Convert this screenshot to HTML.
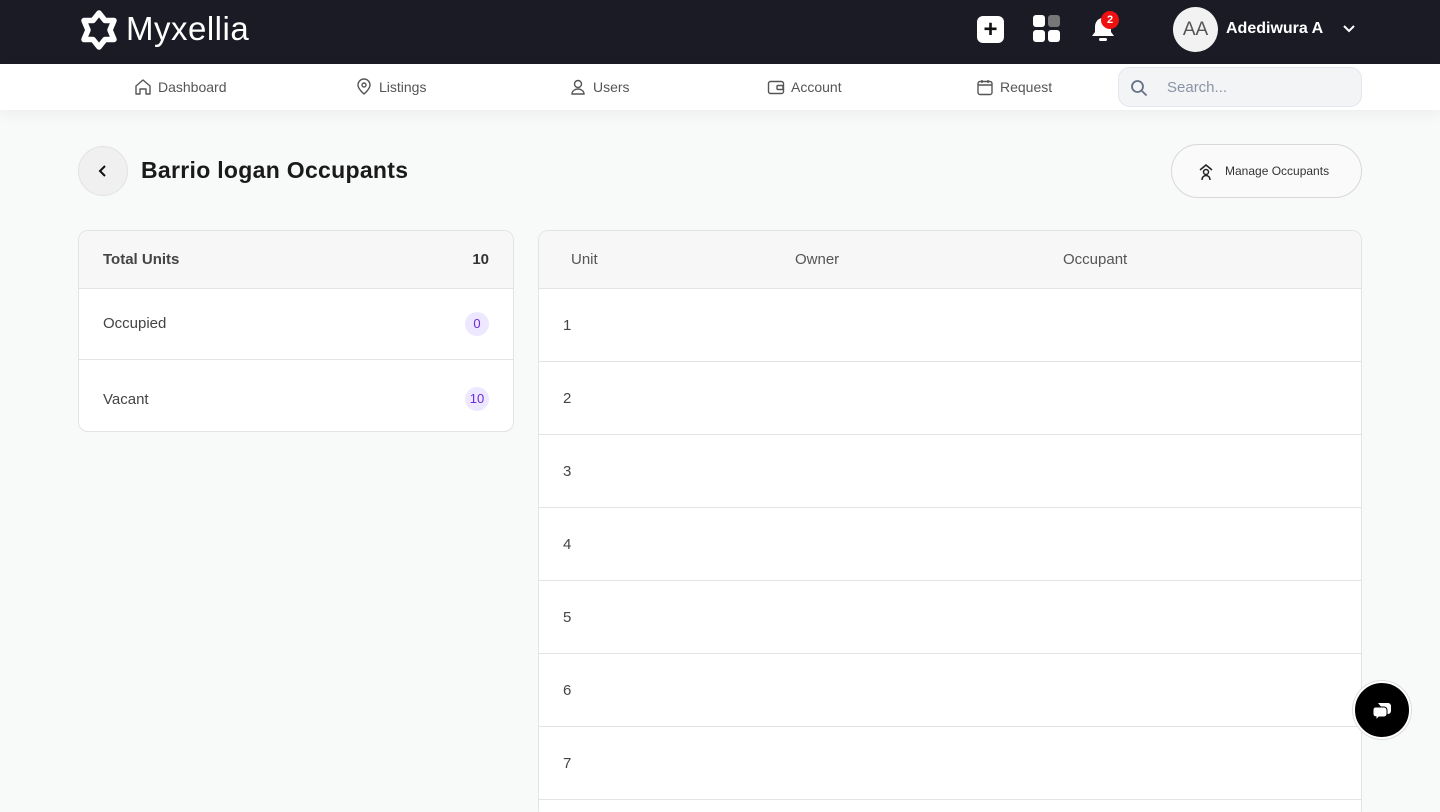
<!DOCTYPE html>
<html style="overflow:hidden;height:812px"><head><style>
*{box-sizing:border-box;margin:0;padding:0}
body{width:1440px;height:812px;overflow:hidden;background:#f8f9f9;font-family:"Liberation Sans",sans-serif;color:#222;position:relative}
.top{position:absolute;left:0;top:0;width:1440px;height:64px;background:#1b1b26}
.nav{position:absolute;left:0;top:64px;width:1440px;height:46px;background:#fff;box-shadow:0 4px 14px rgba(0,0,0,.05)}
.ni{position:absolute;top:0;height:46px;display:flex;align-items:center;gap:6px;font-size:14px;color:#555}
.search{position:absolute;left:1118px;top:3px;width:244px;height:40px;border:1px solid #e3e6ee;background:#f3f4f6;border-radius:12px}
.card{position:absolute;background:#fff;border:1px solid #e3e3e3;border-radius:10px;overflow:hidden}
.badge{position:absolute;right:24px;width:24px;height:24px;border-radius:12px;background:#ede8ff;color:#6b2bd9;font-size:13px;text-align:center;line-height:24px}
.row{position:absolute;left:0;width:100%;border-top:1px solid #e3e3e3;font-size:15px;color:#444}
</style></head><body>
<div class="top">
 <svg style="position:absolute;left:79px;top:9px" width="40" height="42" viewBox="0 0 40 42"><path d="M20 4 L26 11.5 L35 11.5 L31 21 L35 30.5 L26 30.5 L20 38 L14 30.5 L5 30.5 L9 21 L5 11.5 L14 11.5 Z" fill="none" stroke="#fff" stroke-width="5.5" stroke-linejoin="round"/></svg>
 <div style="position:absolute;left:126px;top:10px;font-size:33px;color:#fff;letter-spacing:0.5px">Myxellia</div>
 <div style="position:absolute;left:977px;top:16px;width:27px;height:27px;background:#fff;border-radius:6px;color:#111;font-size:24px;font-weight:bold;text-align:center;line-height:27px">+</div>
 <div style="position:absolute;left:1033px;top:15px;width:12px;height:12px;background:#fff;border-radius:3px"></div>
 <div style="position:absolute;left:1048px;top:15px;width:12px;height:12px;background:#777;border-radius:3px"></div>
 <div style="position:absolute;left:1033px;top:30px;width:12px;height:12px;background:#fff;border-radius:3px"></div>
 <div style="position:absolute;left:1048px;top:30px;width:12px;height:12px;background:#fff;border-radius:3px"></div>
 <svg style="position:absolute;left:1090px;top:16px" width="26" height="28" viewBox="0 0 26 28"><path d="M13 2c-5 0-8 4-8 9v5l-3 4h22l-3-4v-5c0-5-3-9-8-9z" fill="#fff"/><rect x="9" y="22" width="8" height="3" rx="1.5" fill="#fff"/></svg>
 <div style="position:absolute;left:1101px;top:11px;width:18px;height:18px;border-radius:9px;background:#e11;color:#fff;font-size:11px;font-weight:bold;text-align:center;line-height:18px">2</div>
 <div style="position:absolute;left:1173px;top:7px;width:45px;height:45px;border-radius:50%;background:#f2f2f2;color:#555;font-size:19px;text-align:center;line-height:45px">AA</div>
 <div style="position:absolute;left:1226px;top:20px;font-size:16px;color:#fff;font-weight:bold">Adediwura A</div>
 <svg style="position:absolute;left:1342px;top:24px" width="14" height="10"><path d="M2 2l5 5 5-5" stroke="#fff" stroke-width="2" fill="none"/></svg>
</div>
<div class="nav">
 <div class="ni" style="left:134px"><svg width="18" height="18" viewBox="0 0 18 18"><path d="M2 8l7-6 7 6v8h-4v-5h-6v5H2z" fill="none" stroke="#555" stroke-width="1.4" stroke-linejoin="round"/></svg>Dashboard</div>
 <div class="ni" style="left:355px"><svg width="18" height="18" viewBox="0 0 18 18"><path d="M9 16s-6-5-6-9a6 6 0 0112 0c0 4-6 9-6 9z" fill="none" stroke="#555" stroke-width="1.4"/><circle cx="9" cy="7" r="2" fill="none" stroke="#555" stroke-width="1.4"/></svg>Listings</div>
 <div class="ni" style="left:569px"><svg width="18" height="18" viewBox="0 0 18 18"><circle cx="9" cy="6" r="3.5" fill="none" stroke="#555" stroke-width="1.4"/><path d="M3 16c0-3 3-5 6-5s6 2 6 5z" fill="none" stroke="#555" stroke-width="1.4"/></svg>Users</div>
 <div class="ni" style="left:767px"><svg width="18" height="18" viewBox="0 0 18 18"><rect x="1.5" y="3.5" width="15" height="12" rx="2" fill="none" stroke="#555" stroke-width="1.4"/><rect x="10" y="7.5" width="6" height="4" rx="1" fill="none" stroke="#555" stroke-width="1.4"/></svg>Account</div>
 <div class="ni" style="left:976px"><svg width="18" height="18" viewBox="0 0 18 18"><rect x="2" y="3.5" width="14" height="13" rx="2" fill="none" stroke="#555" stroke-width="1.4"/><path d="M2 7h14M6 2v3M12 2v3" stroke="#555" stroke-width="1.4"/></svg>Request</div>
 <div class="search"><svg style="position:absolute;left:11px;top:11px" width="18" height="18"><circle cx="7.5" cy="7.5" r="5.5" fill="none" stroke="#667085" stroke-width="1.8"/><path d="M12 12l4.5 4.5" stroke="#667085" stroke-width="1.8"/></svg><span style="position:absolute;left:48px;top:11px;font-size:15px;color:#8a93a6">Search...</span></div>
</div>
<div style="position:absolute;left:78px;top:146px;width:50px;height:50px;border-radius:50%;background:#f0f0f0;border:1px solid #e2e2e2"><svg style="position:absolute;left:18px;top:17px" width="12" height="14"><path d="M8 2L3 7l5 5" stroke="#111" stroke-width="2" fill="none"/></svg></div>
<div style="position:absolute;left:141px;top:157px;font-size:23px;font-weight:bold;color:#1a1a1a;letter-spacing:0.3px">Barrio logan Occupants</div>
<div style="position:absolute;left:1171px;top:144px;width:191px;height:54px;border:1px solid #d8d8d8;border-radius:27px;background:#fafafa"><svg style="position:absolute;left:26px;top:18px" width="16" height="18" viewBox="0 0 16 18"><path d="M2 7l6-5 6 5" stroke="#222" stroke-width="1.5" fill="none"/><circle cx="8" cy="9" r="2.5" fill="none" stroke="#222" stroke-width="1.5"/><path d="M4 17c0-3 2-4.5 4-4.5s4 1.5 4 4.5" stroke="#222" stroke-width="1.5" fill="none"/></svg><span style="position:absolute;left:53px;top:19px;font-size:12px;color:#333">Manage Occupants</span></div>
<div class="card" style="left:78px;top:230px;width:436px;height:202px">
 <div style="position:absolute;left:0;top:0;width:100%;height:57px;background:#f7f7f7"></div>
 <div style="position:absolute;left:24px;top:20px;font-size:15px;font-weight:bold;color:#444">Total Units</div>
 <div style="position:absolute;right:24px;top:20px;font-size:15px;font-weight:bold;color:#333">10</div>
 <div class="row" style="top:57px;height:71px"><span style="position:absolute;left:24px;top:26px">Occupied</span><div class="badge" style="top:23px">0</div></div>
 <div class="row" style="top:128px;height:74px"><span style="position:absolute;left:24px;top:31px">Vacant</span><div class="badge" style="top:27px">10</div></div>
</div>
<div class="card" style="left:538px;top:230px;width:824px;height:590px">
 <div style="position:absolute;left:0;top:0;width:100%;height:57px;background:#f7f7f7"></div>
 <span style="position:absolute;left:32px;top:20px;font-size:15px;color:#555">Unit</span>
 <span style="position:absolute;left:256px;top:20px;font-size:15px;color:#555">Owner</span>
 <span style="position:absolute;left:524px;top:20px;font-size:15px;color:#555">Occupant</span>
 <div class="row" style="top:57px;height:73px"><span style="position:absolute;left:24px;top:28px">1</span></div>
 <div class="row" style="top:130px;height:73px"><span style="position:absolute;left:24px;top:28px">2</span></div>
 <div class="row" style="top:203px;height:73px"><span style="position:absolute;left:24px;top:28px">3</span></div>
 <div class="row" style="top:276px;height:73px"><span style="position:absolute;left:24px;top:28px">4</span></div>
 <div class="row" style="top:349px;height:73px"><span style="position:absolute;left:24px;top:28px">5</span></div>
 <div class="row" style="top:422px;height:73px"><span style="position:absolute;left:24px;top:28px">6</span></div>
 <div class="row" style="top:495px;height:73px"><span style="position:absolute;left:24px;top:28px">7</span></div>
 <div class="row" style="top:568px;height:30px"></div>
</div>
<div style="position:absolute;left:1353px;top:681px;width:58px;height:58px;border-radius:50%;background:#000;border:2px solid #fff;box-shadow:0 0 0 1px #ddd"><svg style="position:absolute;left:16px;top:17px" width="24" height="22" viewBox="0 0 24 22"><path d="M7 3h10a3 3 0 013 3v5a3 3 0 01-3 3h-1" fill="#fff"/><path d="M4 7h9a3 3 0 013 3v4a3 3 0 01-3 3H8l-3 3v-3.3A3 3 0 012 14v-4a3 3 0 012-3z" fill="#fff" stroke="#000" stroke-width="1"/></svg></div>
</body></html>
